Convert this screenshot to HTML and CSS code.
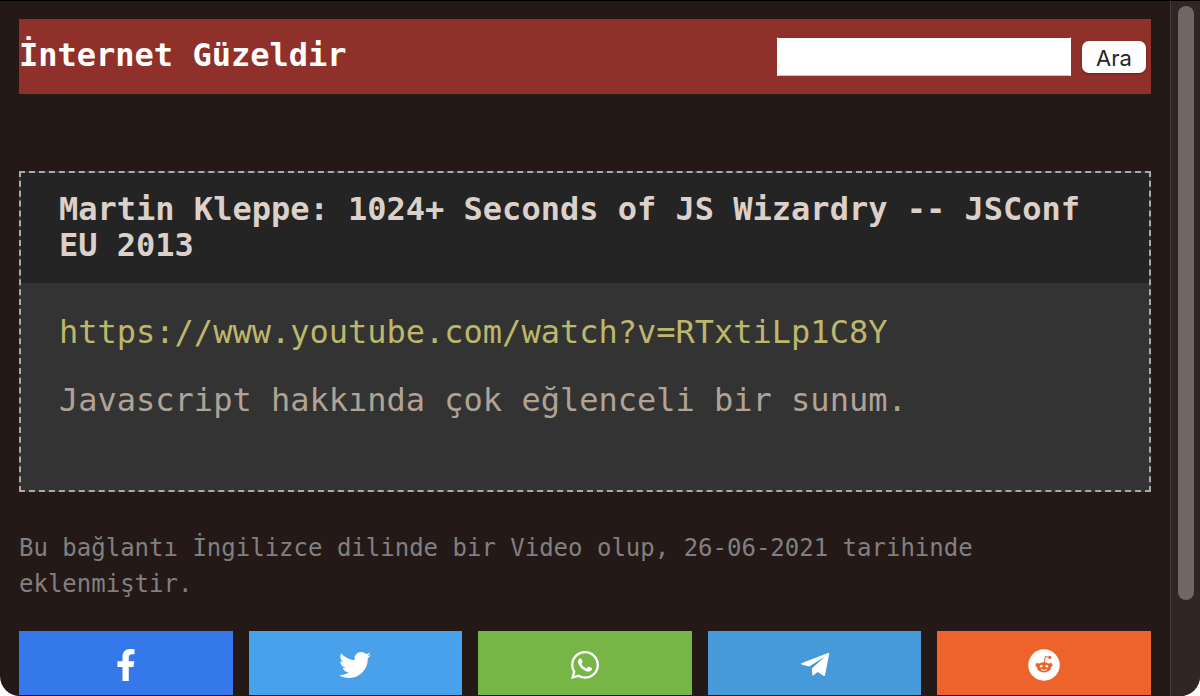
FILE: index.html
```html
<!DOCTYPE html>
<html lang="tr">
<head>
<meta charset="utf-8">
<meta name="viewport" content="width=device-width, initial-scale=1">
<title>İnternet Güzeldir</title>
<link rel="stylesheet" href="styles.css">
</head>
<body>
<div class="window">
  <div class="page">
    <header class="site-header">
      <h1 class="site-title">İnternet Güzeldir</h1>
      <form class="search" role="search">
        <input class="search-input" type="text" name="q" aria-label="Ara">
        <button class="search-button" type="submit">Ara</button>
      </form>
    </header>
    <main>
      <article class="card">
        <h2 class="card-title">Martin Kleppe: 1024+ Seconds of JS Wizardry -- JSConf EU 2013</h2>
        <div class="card-body">
          <a class="card-link" href="https://www.youtube.com/watch?v=RTxtiLp1C8Y">https://www.youtube.com/watch?v=RTxtiLp1C8Y</a>
          <p class="card-text">Javascript hakkında çok eğlenceli bir sunum.</p>
        </div>
      </article>
      <p class="meta">Bu bağlantı İngilizce dilinde bir Video olup, 26-06-2021 tarihinde eklenmiştir.</p>
      <nav class="share" aria-label="Paylaş">
        <a class="share-link facebook" href="#" aria-label="Facebook">
          <svg class="icon" viewBox="-96 0 512 512"><path d="M279.14 288l14.22-92.66h-88.91v-60.13c0-25.35 12.42-50.06 52.24-50.06h40.42V6.26S260.43 0 225.36 0c-73.22 0-121.08 44.38-121.08 124.72v70.62H22.89V288h81.39v224h100.17V288z"/></svg>
        </a>
        <a class="share-link twitter" href="#" aria-label="Twitter">
          <svg class="icon" viewBox="0 0 512 512"><path d="M459.37 151.716c.325 4.548.325 9.097.325 13.645 0 138.72-105.583 298.558-298.558 298.558-59.452 0-114.68-17.219-161.137-47.106 8.447.974 16.568 1.299 25.34 1.299 49.055 0 94.213-16.568 130.274-44.832-46.132-.975-84.792-31.188-98.112-72.772 6.498.974 12.995 1.624 19.818 1.624 9.421 0 18.843-1.3 27.614-3.573-48.081-9.747-84.143-51.98-84.143-102.985v-1.299c13.969 7.797 30.214 12.67 47.431 13.319-28.264-18.843-46.781-51.005-46.781-87.391 0-19.492 5.197-37.36 14.294-52.954 51.655 63.675 129.3 105.258 216.365 109.807-1.624-7.797-2.599-15.918-2.599-24.04 0-57.828 46.782-104.934 104.934-104.934 30.213 0 57.502 12.67 76.67 33.137 23.715-4.548 46.456-13.32 66.599-25.34-7.798 24.366-24.366 44.833-46.132 57.827 21.117-2.273 41.584-8.122 60.426-16.243-14.292 20.791-32.161 39.308-52.628 54.253z"/></svg>
        </a>
        <a class="share-link whatsapp" href="#" aria-label="WhatsApp">
          <svg class="icon" viewBox="-32 0 512 512"><path d="M380.9 97.1C339 55.1 283.2 32 223.9 32c-122.4 0-222 99.6-222 222 0 39.1 10.2 77.3 29.6 111L0 480l117.7-30.9c32.4 17.7 68.9 27 106.1 27h.1c122.3 0 224.1-99.6 224.1-222 0-59.3-25.2-115-67.1-157zm-157 341.6c-33.2 0-65.7-8.9-94-25.7l-6.7-4-69.8 18.3L72 359.2l-4.4-7c-18.5-29.4-28.2-63.3-28.2-98.2 0-101.7 82.8-184.5 184.6-184.5 49.3 0 95.6 19.2 130.4 54.1 34.8 34.9 56.2 81.2 56.1 130.5 0 101.8-84.9 184.6-186.6 184.6zm101.2-138.2c-5.5-2.8-32.8-16.2-37.9-18-5.1-1.9-8.8-2.8-12.5 2.8-3.7 5.6-14.3 18-17.6 21.8-3.2 3.7-6.5 4.2-12 1.4-32.6-16.3-54-29.1-75.5-66-5.7-9.8 5.7-9.1 16.3-30.3 1.8-3.7.9-6.9-.5-9.7-1.4-2.8-12.5-30.1-17.1-41.2-4.5-10.8-9.1-9.3-12.5-9.5-3.2-.2-6.9-.2-10.6-.2-3.7 0-9.7 1.4-14.8 6.9-5.1 5.6-19.4 19-19.4 46.3 0 27.3 19.9 53.7 22.6 57.4 2.8 3.7 39.1 59.7 94.8 83.8 35.2 15.2 49 16.5 66.6 13.9 10.7-1.6 32.8-13.4 37.4-26.4 4.6-13 4.6-24.1 3.2-26.4-1.3-2.5-5-3.9-10.5-6.6z"/></svg>
        </a>
        <a class="share-link telegram" href="#" aria-label="Telegram">
          <svg class="icon" viewBox="0 0 32 32"><path d="M2.4 14.2 29 4Q30.400 3.600 30.200 5L26 26.200Q25.700 27.600 24.400 26.800L18.600 22.900 14.600 26.200Q13.500 26.800 13.300 25.400L12.800 19.500 25.800 7.800 10.200 17.600 2.500 15.400Q1.500 14.800 2.400 14.200Z"/></svg>
        </a>
        <a class="share-link reddit" href="#" aria-label="Reddit">
          <svg class="icon" viewBox="0 0 32 32"><circle cx="16" cy="16" r="15.700"/><g class="reddit-face"><circle cx="9.500" cy="16" r="2.100"/><circle cx="22.500" cy="16" r="2.100"/><ellipse cx="16" cy="18.400" rx="7" ry="5.100"/><circle cx="21.800" cy="8.400" r="1.600"/></g><path class="reddit-antenna" d="M16.200 14.200 17.300 7.500 21 8.400"/><circle cx="13.200" cy="17.300" r="1.300"/><circle cx="18.800" cy="17.300" r="1.300"/><path class="reddit-smile" d="M13 20.500Q16 22.400 19 20.500"/></svg>
        </a>
      </nav>
    </main>
  </div>
  <div class="scrollbar" aria-hidden="true"><div class="thumb"></div></div>
</div>
</body>
</html>
```
FILE: styles.css
```css
* { box-sizing: border-box; }

body {
  margin: 0;
  background: #fff;
  font-family: "DejaVu Sans Mono", Menlo, monospace;
  font-size: 32px;
  line-height: 36px;
}

h1, h2, p { margin: 0; }

.window {
  display: flex;
  min-height: 100vh;
  overflow: hidden;
  border-top: 1px solid #000;
  border-radius: 0 0 20px 20px;
  background: #241917;
}

.page {
  flex: 1;
  min-width: 0;
  padding: 18px 19px 1px;
}

.site-header {
  display: flex;
  align-items: flex-start;
  justify-content: space-between;
  padding: 18px 5px 18px 0;
  background: #8f302a;
}

.site-title {
  color: #fff;
  font-size: 32px;
  line-height: 36px;
}

.search {
  display: flex;
  align-items: center;
  gap: 11px;
}

.search-input {
  width: 294px;
  height: 39px;
  padding: 4px 6px;
  border: 1px solid #fff;
  border-top-color: #8a2e2b;
  border-bottom-color: #c8c4c4;
  background: #fff;
  font: 22px Inter, sans-serif;
}

.search-button {
  width: 64px;
  height: 32px;
  padding: 3px 0 0;
  border: 0;
  border-radius: 7px;
  background: #fff;
  box-shadow: 0 1px 2px rgba(0, 0, 0, 0.3);
  color: #262626;
  font: 22px Inter, sans-serif;
}

.card {
  margin-top: 77px;
  border: 2px dashed #aaa;
  background: #333;
}

.card-title {
  padding: 18px 38px 20px;
  background: #242424;
  color: #dbd1ca;
  font-size: 32px;
  line-height: 36px;
}

.card-body {
  padding: 31px 38px 72px;
}

.card-link {
  display: block;
  color: #bdb76b;
  text-decoration: none;
  overflow-wrap: anywhere;
}

.card-text {
  margin-top: 32px;
  color: #b0a396;
}

.meta {
  margin-top: 38px;
  color: #808080;
  font-size: 24px;
}

.share {
  display: grid;
  grid-template-columns: repeat(5, 1fr);
  gap: 16px;
  margin-top: 29px;
}

.share-link {
  display: flex;
  justify-content: center;
  padding: 18px 0 14px;
}

.facebook { background: #3578ea; }
.twitter { background: #49a1eb; }
.whatsapp { background: #78b547; }
.telegram { background: #479ad9; }
.reddit { background: #ee632c; }

.icon {
  width: 32px;
  height: 32px;
  fill: #fff;
}

.reddit-face { fill: #ee632c; }

.reddit-antenna,
.reddit-smile {
  fill: none;
  stroke: #ee632c;
  stroke-width: 1;
}

.reddit-smile { stroke: #fff; }

.scrollbar {
  display: flex;
  width: 30px;
  padding: 5px 6px 96px 7px;
  border-left: 1px solid #463c3a;
  background: #302624;
}

.thumb {
  flex: 1;
  border-radius: 8px;
  background: #716765;
}
```
